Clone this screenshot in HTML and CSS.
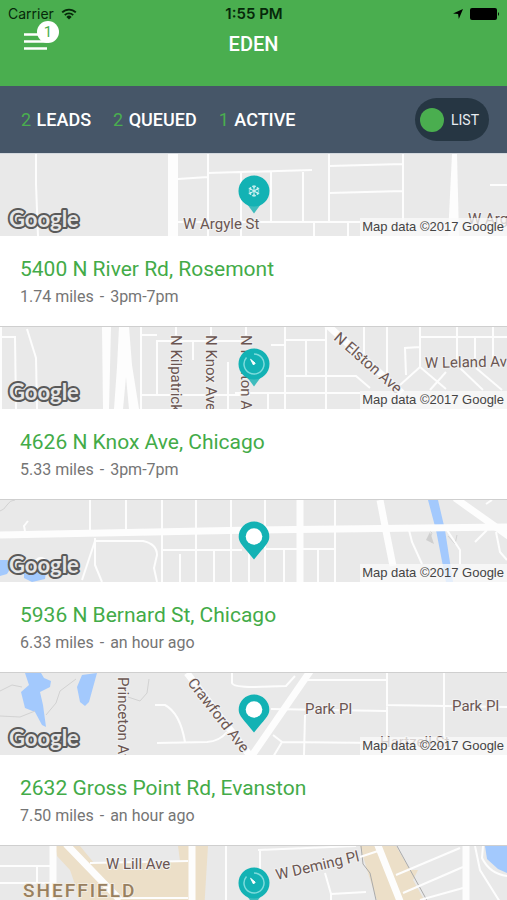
FILE: index.html
```
<!DOCTYPE html>
<html lang="en">
<head>
<meta charset="utf-8">
<meta name="viewport" content="width=device-width, initial-scale=1">
<title>Eden</title>
<link rel="stylesheet" href="styles.css">
</head>
<body>

<header class="top">
	<div class="status">
		<div class="status-side">
			<span>Carrier</span>
			<svg class="wifi" width="16" height="12" viewBox="0 0 16 12">
				<path d="M1.2 4.4a9.6 9.6 0 0 1 13.6 0M3.8 7.1a6 6 0 0 1 8.4 0" fill="none" stroke="#06280a" stroke-width="1.9"/>
				<path d="M8 11.6L5.4 8.9a3.7 3.7 0 0 1 5.2 0z" fill="#06280a"/>
			</svg>
		</div>
		<span class="clock">1:55 PM</span>
		<div class="status-side right">
			<svg width="10" height="10" viewBox="0 0 10 10"><path d="M10 0L5.8 10 5.1 5 0 4.4z" fill="#000"/></svg>
			<svg width="30" height="12" viewBox="0 0 30 12"><rect width="27" height="12" rx="2" fill="#000"/><path d="M28 4q2 2 0 4z" fill="#000"/></svg>
		</div>
	</div>
	<div class="nav">
		<button class="menu" type="button" aria-label="Menu">
			<svg width="23" height="17" viewBox="0 0 23 17"><path d="M0 1.5h23M0 8.5h23M0 15.5h23" stroke="#fff" stroke-width="2.4"/></svg>
			<span class="badge">1</span>
		</button>
		<h1>EDEN</h1>
	</div>
</header>

<div class="bar">
	<ul class="stats">
		<li><b>2</b> LEADS</li>
		<li><b>2</b> QUEUED</li>
		<li><b>1</b> ACTIVE</li>
	</ul>
	<button class="toggle" type="button"><span class="dot"></span>LIST</button>
</div>

<main class="list">

	<article class="card">
		<div class="map">
			<svg class="streets" viewBox="0 0 507 82" preserveAspectRatio="xMidYMid slice">
				<g class="thin">
					<path d="M36 0V30L38 82M178 25L208 23M208 0V82M208 19L312 16M241 18V82M271 18V68M303 18V68M178 68H360M314 68V82M348 68V82"/>
					<path d="M329 0V68M403 0V68M329 12L403 10M329 39L403 37M490 31H507"/>
				</g>
				<path class="thick wide" d="M173 0V82"/>
				<path class="fill" d="M452 0H457L459 82H448z"/>
				<text class="street" x="183" y="75">W Argyle St</text>
				<text class="street" x="468" y="70">W Argyle</text>
			</svg>
			<svg class="pin" width="32" height="40" viewBox="0 0 32 40">
				<path d="M9 29H23L16 38.5z" fill="#3fbcbd"/>
				<circle cx="16" cy="16" r="15.5" fill="#13b2b4"/>
				<path d="M16 10V22M10.8 13L21.2 19M10.8 19L21.2 13M14.2 10.8L16 12.6 17.8 10.8M14.2 21.2L16 19.4 17.8 21.2M10.8 15.3L13 14.4 12.6 12M21.2 15.3L19 14.4 19.4 12M10.8 16.7L13 17.6 12.6 20M21.2 16.7L19 17.6 19.4 20" fill="none" stroke="#c9f0f0" stroke-width="1.1"/>
			</svg>
			<svg class="google" width="76" height="30"><text x="2" y="21">Google</text></svg>
			<span class="credit">Map data ©2017 Google</span>
		</div>
		<div class="info">
			<h2><a href="#">5400 N River Rd, Rosemont</a></h2>
			<p>1.74 miles<span class="dash">-</span>3pm-7pm</p>
		</div>
	</article>

	<article class="card">
		<div class="map">
			<svg class="streets" viewBox="0 0 507 82" preserveAspectRatio="xMidYMid slice">
				<g class="thin">
					<path d="M1 0V82M0 10H15L16 82M27 2L36 31L37 82M141 0V82M141 8H157M157 13V68M157 14H245M141 68H250M193 14V33M228 35V82M176 0V10M211 0V10M246 0V10"/>
					<path d="M285 0V82M271 18H285M285 13H325M306 13V49M326 0V82M285 49H356L370 61M235 66H360M268 66V82M364 0V30M387 0V52"/>
					<path d="M420 0V40L400 58M420 10H507M457 0V32M475 10V32M493 0V32M420 20L405 21L406 48M420 40L446 62M460 41L483 63M476 41L502 63M446 45L430 63"/>
				</g>
				<path class="fill" d="M102 0H111L109 82H103zM119 0H129L132 38L139 82H129L126 50L123 82H114L117 40z"/>
				<path class="thick" d="M325 -4L402 66"/>
				<text class="street" transform="translate(171 8) rotate(90)">N Kilpatrick</text>
				<text class="street" transform="translate(206 8) rotate(90)">N Knox Ave</text>
				<text class="street" transform="translate(241 8) rotate(90)">N Kenton A</text>
				<text class="street" transform="translate(333 12) rotate(41)">N Elston Ave</text>
				<text class="street" transform="translate(425 41) rotate(-1)">W Leland Ave</text>
			</svg>
			<svg class="pin" width="32" height="40" viewBox="0 0 32 40">
				<path d="M9 29H23L16 38.5z" fill="#3fbcbd"/>
				<circle cx="16" cy="16" r="15.5" fill="#13b2b4"/>
				<path d="M16 6A10 10 0 1 1 8.5 9.4" fill="none" stroke="#7ddbdc" stroke-width="1.5"/>
				<path d="M12.6 11.3L17.2 15.2 15.5 17z" fill="#fff" stroke="#fff"/>
			</svg>
			<svg class="google" width="76" height="30"><text x="2" y="21">Google</text></svg>
			<span class="credit">Map data ©2017 Google</span>
		</div>
		<div class="info">
			<h2><a href="#">4626 N Knox Ave, Chicago</a></h2>
			<p>5.33 miles<span class="dash">-</span>3pm-7pm</p>
		</div>
	</article>

	<article class="card">
		<div class="map">
			<svg class="streets" viewBox="0 0 507 82" preserveAspectRatio="xMidYMid slice">
				<path class="water" d="M0 60H8L12 66 7 74 0 76zM24 72L34 68 46 72 45 79 32 82 24 78z"/>
				<path class="trail" d="M0 11Q4 10 7 5T15 0M427 28L432 33 430 38 432 43M448 36L455 44 457 35"/>
				<g class="thin">
					<path d="M90 0V33M126 0V33M162 0V82M196 0V82M231 0V82M162 50H242M180 54V82M214 50V82M249 50V82"/>
					<path d="M95 38V65L102 82M95 41L82 80M95 41H143Q157 44 157 55L154 68L157 82M25 31L24 26L28 21M35 62Q40 54 48 62"/>
					<path d="M265 0V82M335 0V82M265 49H335M284 49V82M318 49V82M409 30L412 42L422 64M447 30L460 50V64M496 32L500 52L507 60M475 42L487 30M486 4L492 0"/>
				</g>
				<path class="water" d="M428 0H438L445 30 453 82H446L436 30z"/>
				<path class="thick" d="M380 0L386 31L393 66M300 0V82M455 -2L510 37"/>
				<path class="thick" d="M0 35L254 30L507 27"/>
				<path class="smudge" d="M430 32L434 44 426 40z"/>
			</svg>
			<svg class="pin" width="32" height="40" viewBox="0 0 32 40">
				<path d="M16 .5A15.3 15.3 0 0 1 31.3 16C31.3 22 26 26 16 38.5 6 26 .7 22 .7 16A15.3 15.3 0 0 1 16 .5z" fill="#13b2b4"/>
				<circle cx="16" cy="15.5" r="8.3" fill="#fff"/>
			</svg>
			<svg class="google" width="76" height="30"><text x="2" y="21">Google</text></svg>
			<span class="credit">Map data ©2017 Google</span>
		</div>
		<div class="info">
			<h2><a href="#">5936 N Bernard St, Chicago</a></h2>
			<p>6.33 miles<span class="dash">-</span>an hour ago</p>
		</div>
	</article>

	<article class="card">
		<div class="map">
			<svg class="streets" viewBox="0 0 507 82" preserveAspectRatio="xMidYMid slice">
				<path class="water" d="M25 0H41L44 5 51 8 50 14 40 19 43 32 46 54 42 52 35 39 25 35 21 19 29 12zM82 2L97 0 89 29 85 33 80 29 77 14z"/>
				<path class="trail" d="M0 43L20 44 35 38M46 42L56 30 60 18 76 6M0 18L12 12 22 14M128 24L140 28 147 20 149 6"/>
				<g class="thin">
					<path d="M155 32H165Q180 40 185 69M157 70L207 69Q220 68 227 59M232 0V10Q233 14 254 14"/>
					<path d="M253 14L286 13L295 3M306 7H386M387 0V68M271 36L386 38M386 32L507 34M444 0V66M305 42L304 82M281 69L380 70M273 62L282 69L273 84"/>
				</g>
				<path class="thick" d="M187 0L254 88M311 -3L251 84"/>
				<text class="street" transform="translate(118 4) rotate(90)">Princeton Ave</text>
				<text class="street" transform="translate(187 10) rotate(52)">Crawford Ave</text>
				<text class="street" x="305" y="41">Park Pl</text>
				<text class="street" x="452" y="38">Park Pl</text>
				<text class="street" x="380" y="74">Hartzell St</text>
			</svg>
			<svg class="pin" width="32" height="40" viewBox="0 0 32 40">
				<path d="M16 .5A15.3 15.3 0 0 1 31.3 16C31.3 22 26 26 16 38.5 6 26 .7 22 .7 16A15.3 15.3 0 0 1 16 .5z" fill="#13b2b4"/>
				<circle cx="16" cy="15.5" r="8.3" fill="#fff"/>
			</svg>
			<svg class="google" width="76" height="30"><text x="2" y="21">Google</text></svg>
			<span class="credit">Map data ©2017 Google</span>
		</div>
		<div class="info">
			<h2><a href="#">2632 Gross Point Rd, Evanston</a></h2>
			<p>7.50 miles<span class="dash">-</span>an hour ago</p>
		</div>
	</article>

	<article class="card">
		<div class="map">
			<svg class="streets" viewBox="0 0 507 82" preserveAspectRatio="xMidYMid slice">
				<path class="area" d="M55 0H80L94 17 180 15 178 0H208L203 82H90L70 24 57 10z"/>
				<path class="area" d="M360 0H396L410 24 418 24 413 34 440 82H386L368 27z"/>
				<path class="water" d="M485 0H507V27L498 23 487 13z"/>
				<path class="trail dark" d="M361 0L363 18L370 27L376 54M397 0L430 60"/>
				<g class="thin">
					<path d="M0 20H50M0 37H50M37 20V37M90 17L188 15M120 52H188M226 0V82M258 4L356 0M260 4V24M325 27L331 48V60M331 48L366 46M360 11L378 5"/>
					<path d="M396 29L460 2M403 47L463 21M420 54L463 42M475 0L480 24L500 56M483 0L482 12Q490 28 507 30"/>
				</g>
				<path class="thick" d="M53 0V82M66 -2L120 54M192 0V82M377 -3L402 60M466 0V82"/>
				<text class="street" x="106" y="23">W Lill Ave</text>
				<text class="street" transform="translate(277 34) rotate(-13)">W Deming Pl</text>
				<text class="district" x="23" y="51">SHEFFIELD</text>
			</svg>
			<svg class="pin" width="32" height="40" viewBox="0 0 32 40">
				<path d="M9 29H23L16 38.5z" fill="#3fbcbd"/>
				<circle cx="16" cy="16" r="15.5" fill="#13b2b4"/>
				<path d="M16 6A10 10 0 1 1 8.5 9.4" fill="none" stroke="#7ddbdc" stroke-width="1.5"/>
				<path d="M12.6 11.3L17.2 15.2 15.5 17z" fill="#fff" stroke="#fff"/>
			</svg>
		</div>
	</article>

</main>

</body>
</html>
```
FILE: styles.css
```
* {
  box-sizing: border-box;
}
body {
  margin: 0;
  height: 100vh;
  display: flex;
  flex-direction: column;
  overflow: hidden;
  background: #fff;
  font-family: Roboto, "Liberation Sans", sans-serif;
}
h1, h2, p, ul {
  margin: 0;
  padding: 0;
}
button {
  border: 0;
  padding: 0;
  font-family: inherit;
  cursor: pointer;
}
svg {
  display: block;
}

/* header */
.top {
  flex: none;
  height: 86px;
  background: #4aae4f;
}
.status {
  display: flex;
  align-items: center;
  height: 28px;
  padding: 0 7px 0 8px;
  font: 14px/28px Inter, sans-serif;
  color: #06280a;
}
.status-side {
  flex: 1;
  display: flex;
  align-items: center;
  gap: 7px;
}
.status-side.right {
  justify-content: flex-end;
}
.clock {
  font-size: 15px;
  font-weight: 600;
}
.nav {
  position: relative;
  display: flex;
  justify-content: center;
  height: 32px;
}
.nav h1 {
  font-size: 20px;
  font-weight: 500;
  line-height: 32px;
  color: #fff;
}
.menu {
  position: absolute;
  left: 24px;
  top: 5px;
  background: none;
}
.badge {
  position: absolute;
  left: 13px;
  top: -12px;
  width: 22px;
  height: 22px;
  border-radius: 50%;
  background: #fff;
  color: #4aae4f;
  font-size: 15px;
  line-height: 22px;
}

/* counters */
.bar {
  flex: none;
  display: flex;
  align-items: center;
  justify-content: space-between;
  height: 68px;
  padding: 0 18px 0 21px;
  background: #465668;
  border-bottom: 1px solid #d3d8de;
}
.stats {
  display: flex;
  gap: 22px;
  list-style: none;
  font-size: 18px;
  font-weight: 500;
  color: #fff;
}
.stats b {
  margin-right: 1px;
  font-weight: 400;
  color: #4aae4f;
}
.toggle {
  display: flex;
  align-items: center;
  gap: 7px;
  width: 74px;
  height: 43px;
  padding-left: 5px;
  border-radius: 22px;
  background: #263643;
  color: #e8edf2;
  font-size: 14px;
}
.dot {
  width: 24px;
  height: 24px;
  border-radius: 50%;
  background: #4aae4f;
}

/* list */
.list {
  flex: 1;
  min-height: 0;
  overflow: hidden;
}
.card {
  border-bottom: 1px solid #cfcfcf;
}
.map {
  position: relative;
  height: 82px;
  overflow: hidden;
  background: #e9e9e9;
}
.streets {
  width: 100%;
  height: 100%;
}
.thin, .thick, .trail {
  fill: none;
  stroke: #fdfdfd;
}
.thin {
  stroke-width: 2;
}
.thick {
  stroke-width: 7;
}
.thick.wide {
  stroke-width: 10;
}
.fill {
  fill: #fdfdfd;
}
.trail {
  stroke: #d2d2d2;
}
.trail.dark {
  stroke: #aaa;
}
.smudge {
  fill: #cfcfcf;
}
.water {
  fill: #a3c9fd;
}
.area {
  fill: #ecdfc8;
}
.street {
  font-size: 15px;
  fill: #6b5652;
  stroke: #f1f1f1;
  stroke-width: 2px;
  paint-order: stroke;
}
.district {
  font-size: 19px;
  font-weight: 500;
  letter-spacing: 2px;
  fill: #98805f;
  stroke: #f3ece0;
  stroke-width: 2px;
  paint-order: stroke;
}
.pin {
  position: absolute;
  left: 50%;
  top: 21px;
  margin-left: -16px;
}
.google {
  position: absolute;
  left: 7px;
  bottom: 0;
}
.google text {
  font: 700 22px Lato, sans-serif;
  fill: #e6e6e6;
  stroke: #5a5a5a;
  stroke-width: 4px;
  stroke-linejoin: round;
  paint-order: stroke;
}
.credit {
  position: absolute;
  right: 0;
  bottom: 0;
  padding: 0 3px 0 2px;
  background: rgba(250, 250, 250, .75);
  font: 13px/18px "Liberation Sans", sans-serif;
  color: #444;
}
.info {
  height: 90px;
  padding: 20px 20px 0;
}
.info h2 {
  font-size: 21px;
  font-weight: 400;
  line-height: 26px;
}
.info a {
  color: #43ab48;
  text-decoration: none;
}
.info p {
  margin-top: 4px;
  font-size: 16px;
  line-height: 22px;
  color: #757575;
}
.dash {
  margin: 0 6px;
}
```
